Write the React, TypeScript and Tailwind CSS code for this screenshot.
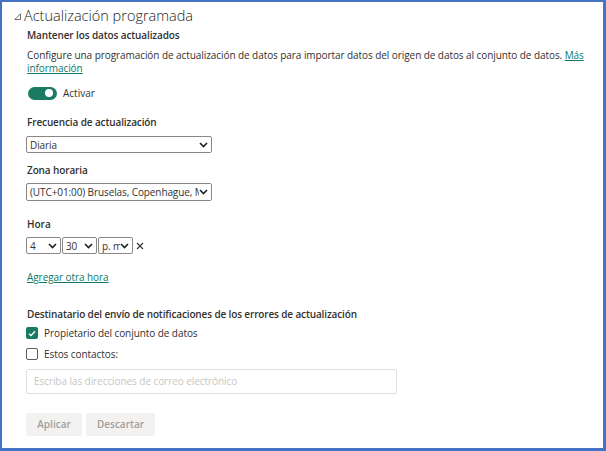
import React from "react";

const font = { fontFamily: "'Open Sans', 'Noto Sans', sans-serif" };

function Chevron() {
  return (
    <svg width="9" height="6" viewBox="0 0 9 6" className="shrink-0">
      <path d="M1 1 L4.5 4.5 L8 1" fill="none" stroke="#201f1e" strokeWidth="1.6" />
    </svg>
  );
}

function Select({ value, className }: { value: string; className: string }) {
  return (
    <div
      className={`flex items-center justify-between border border-[#8a8886] rounded-[2px] bg-white pl-[3px] pr-[3px] overflow-hidden ${className}`}
    >
      <span className="text-[10px] leading-[14px] text-[#323130] whitespace-nowrap overflow-hidden tracking-[-0.1px]">{value}</span>
      <Chevron />
    </div>
  );
}

export default function App() {
  return (
    <div
      style={font}
      className="w-[606px] h-[451px] bg-white border-l-2 border-t-2 border-r-[3px] border-b-[3px] border-[#4472c4] text-[#323130] overflow-hidden"
    >
      <div className="flex items-center h-4 mt-[6px] pl-[12px]">
        <svg width="8" height="8" viewBox="0 0 8 8" className="mr-[2px] mt-[1px]">
          <path d="M6.5 0.8 L6.5 6.5 L0.8 6.5 Z" fill="none" stroke="#605e5c" strokeWidth="0.9" />
        </svg>
        <span className="text-[14.5px] leading-4 font-light text-[#252423]">Actualización programada</span>
      </div>

      <div className="pl-[24px]">
        <div className="mt-1 h-[14px] leading-[14px] text-[10px] font-semibold pl-[1px] tracking-[-0.12px]">Mantener los datos actualizados</div>
        <div className="mt-[7px] text-[10px] leading-[13px] pl-[1px] tracking-[-0.07px]">
          Configure una programación de actualización de datos para importar datos del origen de datos al conjunto de datos.{" "}
          <span className="text-[#117865] underline">
            Más
            <br />
            información
          </span>
        </div>

        <div className="mt-[11px] h-[14px] flex items-center pl-[2px]">
          <div className="w-[29px] h-[13px] rounded-full bg-[#1b7a62] relative">
            <div className="absolute right-[4px] top-[2.5px] w-[8px] h-[8px] rounded-full bg-white" />
          </div>
          <span className="ml-[6px] text-[10px]">Activar</span>
        </div>

        <div className="mt-[15px] h-[14px] leading-[14px] text-[10px] font-semibold pl-[1px] tracking-[-0.12px]">Frecuencia de actualización</div>
        <Select value="Diaria" className="mt-[7px] w-[186px] h-[17px]" />

        <div className="mt-[10px] h-[14px] leading-[14px] text-[10px] font-semibold pl-[1px] tracking-[-0.12px]">Zona horaria</div>
        <Select value="(UTC+01:00) Bruselas, Copenhague, Madrid, París" className="mt-[6px] w-[186px] h-[18px]" />

        <div className="mt-[16px] h-[14px] leading-[14px] text-[10px] font-semibold pl-[1px]">Hora</div>
        <div className="mt-[6px] flex items-center h-[17px]">
          <Select value="4" className="w-[35px] h-[17px]" />
          <Select value="30" className="ml-[1px] w-[35px] h-[17px]" />
          <Select value="p. m." className="ml-[1px] w-[35px] h-[17px]" />
          <svg width="8" height="8" viewBox="0 0 8 8" className="ml-[3px]">
            <path d="M1 1 L7 7 M7 1 L1 7" stroke="#323130" strokeWidth="1.1" />
          </svg>
        </div>

        <div className="mt-[16px] h-[14px] leading-[14px] text-[10px] pl-[1px] text-[#117865] underline tracking-[-0.07px]">Agregar otra hora</div>

        <div className="mt-[23px] h-[14px] leading-[14px] text-[10px] font-semibold pl-[1px] tracking-[-0.14px]">
          Destinatario del envío de notificaciones de los errores de actualización
        </div>

        <div className="mt-[5px] h-[14px] flex items-center">
          <div className="w-[12px] h-[12px] rounded-[2px] bg-[#1b7a62] flex items-center justify-center">
            <svg width="8" height="7" viewBox="0 0 8 7">
              <path d="M1 3.8 L3 5.6 L7 1.2" fill="none" stroke="white" strokeWidth="1.4" />
            </svg>
          </div>
          <span className="ml-[6px] text-[10px] tracking-[-0.07px]">Propietario del conjunto de datos</span>
        </div>

        <div className="mt-[7px] h-[14px] flex items-center">
          <div className="w-[12px] h-[12px] rounded-[2px] border border-[#605e5c] bg-white" />
          <span className="ml-[6px] text-[10px] tracking-[-0.07px]">Estos contactos:</span>
        </div>

        <div className="mt-[8px] w-[371px] h-[25px] border border-[#e1dfdd] rounded-[2px] flex items-center pl-[7px]">
          <span className="text-[10px] text-[#c8c6c4] tracking-[-0.07px]">Escriba las direcciones de correo electrónico</span>
        </div>

        <div className="mt-[19px] flex gap-[4px]">
          <div className="w-[56px] h-[23px] rounded-[2px] bg-[#f3f2f1] flex items-center justify-center text-[10px] font-semibold text-[#a19f9d]">
            Aplicar
          </div>
          <div className="w-[69px] h-[23px] rounded-[2px] bg-[#f3f2f1] flex items-center justify-center text-[10px] font-semibold text-[#a19f9d]">
            Descartar
          </div>
        </div>
      </div>
    </div>
  );
}
